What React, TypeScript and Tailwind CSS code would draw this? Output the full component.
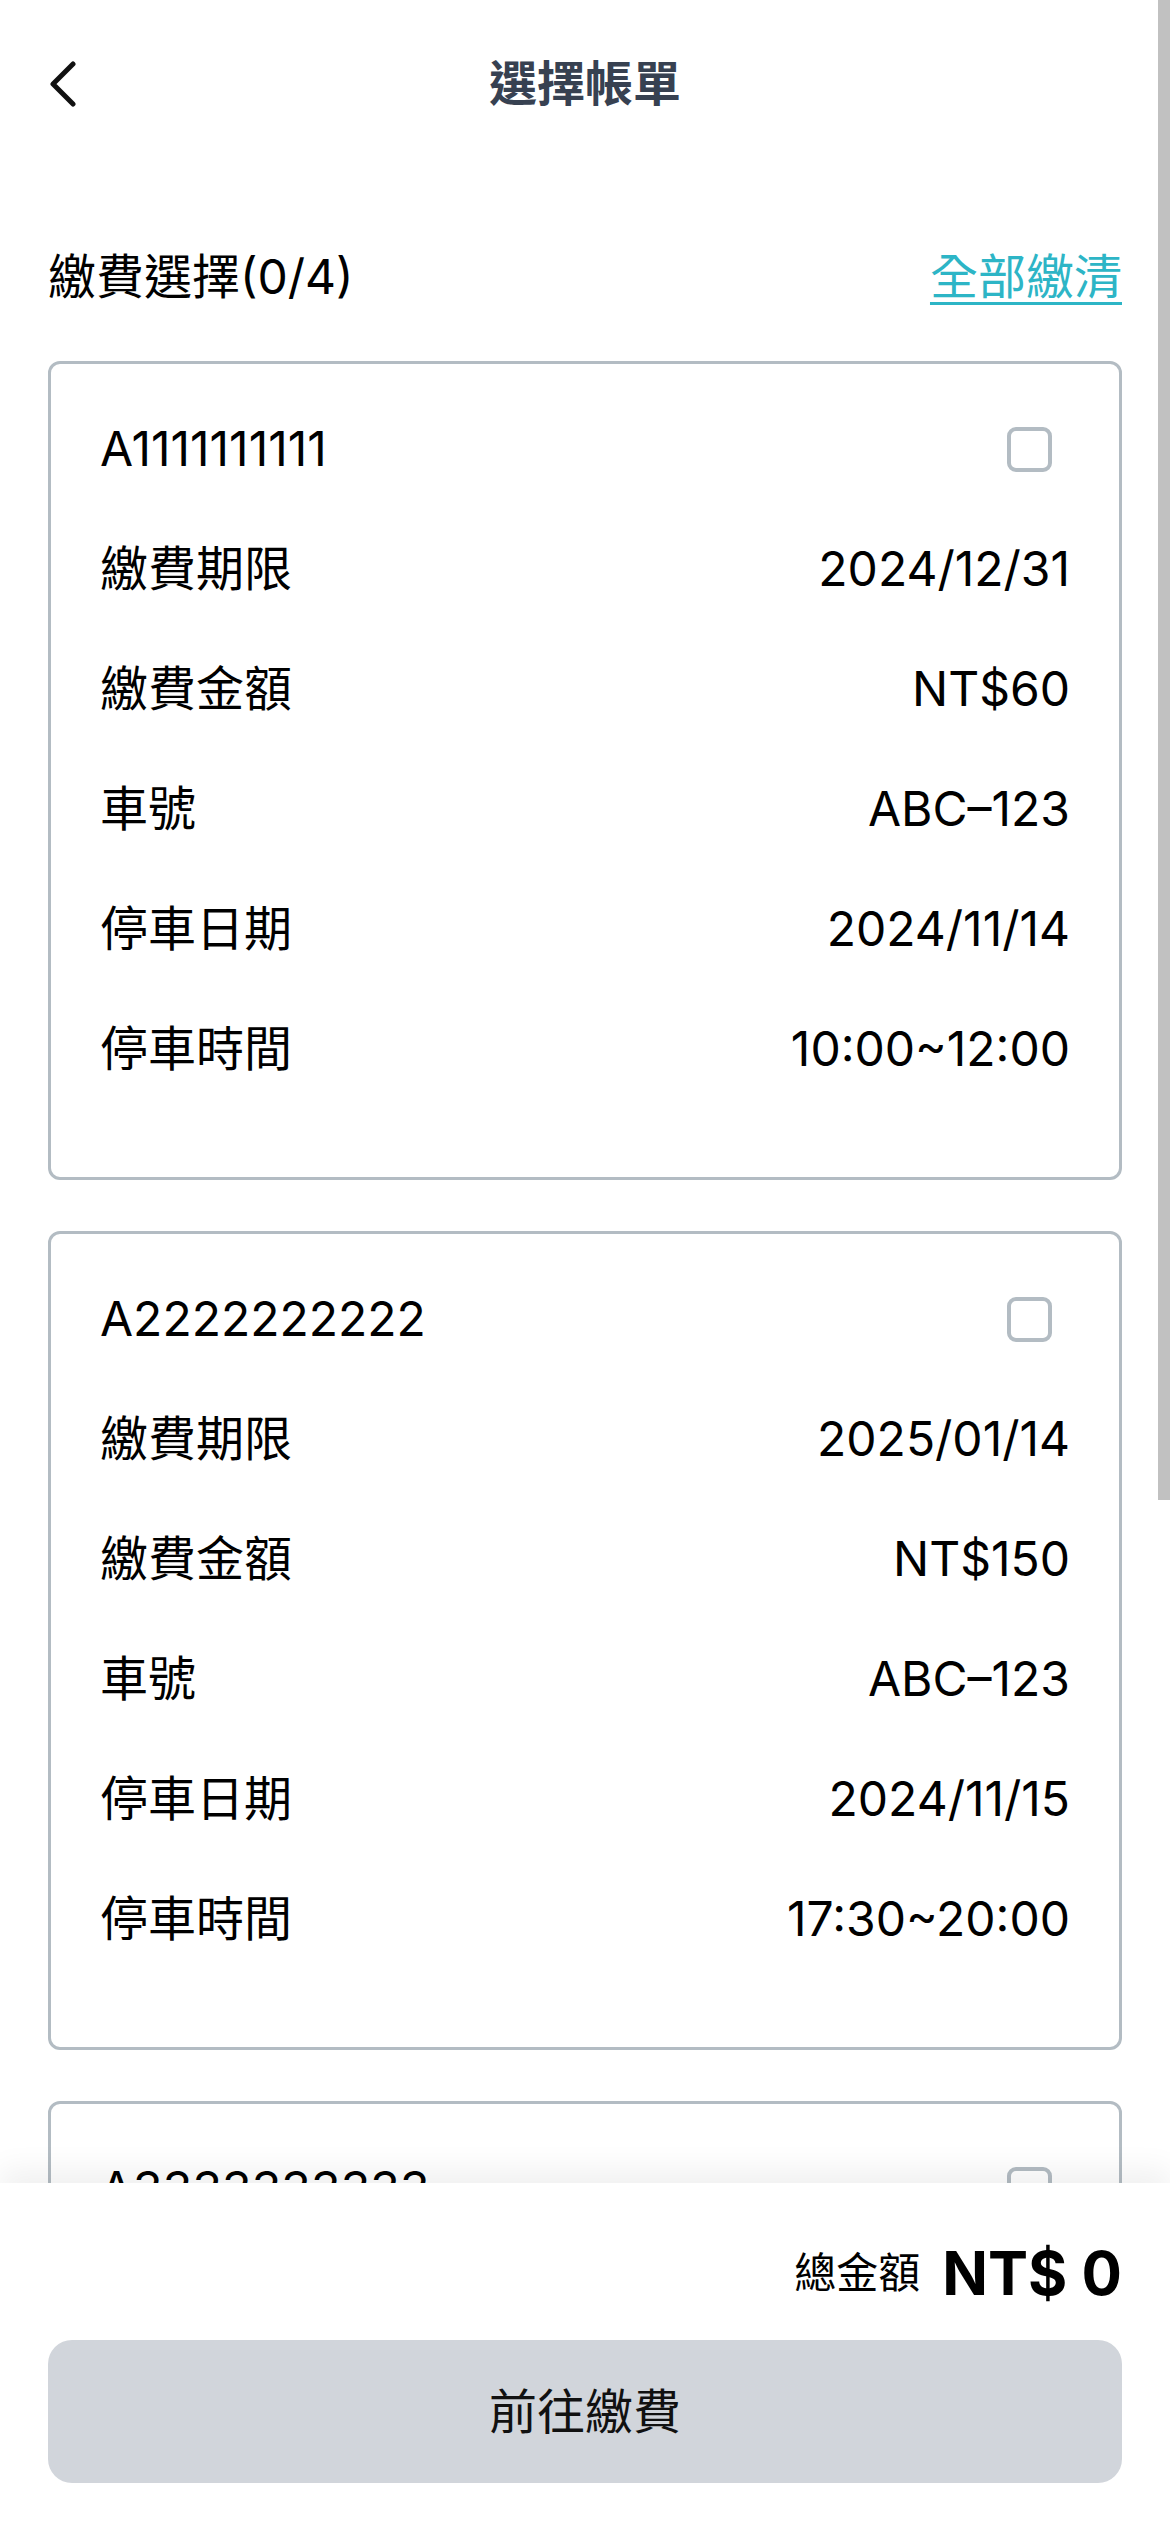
import React from 'react';

type Bill = {
  id: string;
  deadline: string;
  amount: number;
  plate: string;
  date: string;
  time: string;
};

const bills: Bill[] = [
  { id: 'A1111111111', deadline: '2024/12/31', amount: 60, plate: 'ABC-123', date: '2024/11/14', time: '10:00~12:00' },
  { id: 'A2222222222', deadline: '2025/01/14', amount: 150, plate: 'ABC-123', date: '2024/11/15', time: '17:30~20:00' },
  { id: 'A3333333333', deadline: '2025/01/20', amount: 90, plate: 'ABC-123', date: '2024/11/20', time: '09:00~10:30' },
  { id: 'A4444444444', deadline: '2025/02/01', amount: 120, plate: 'ABC-123', date: '2024/11/28', time: '13:00~15:00' },
];

const Row = ({ label, value }: { label: string; value: string }) => (
  <div className="flex h-[120px] items-center justify-between">
    <span>{label}</span>
    <span>{value}</span>
  </div>
);

const BillCard = ({ bill }: { bill: Bill }) => (
  <div className="shrink-0 rounded-[12px] border-[3px] border-[#b3bcc3] bg-white px-[49px] pt-[25px] pb-[68px]">
    <div className="flex h-[120px] items-center justify-between">
      <span>{bill.id}</span>
      <span className="mr-[18px] h-[45px] w-[45px] rounded-[9px] border-[4px] border-[#b3bcc3]" />
    </div>
    <Row label="繳費期限" value={bill.deadline} />
    <Row label="繳費金額" value={`NT$${bill.amount}`} />
    <Row label="車號" value={bill.plate.replace('-', '–')} />
    <Row label="停車日期" value={bill.date} />
    <Row label="停車時間" value={bill.time} />
  </div>
);

export default function App() {
  return (
    <div className="relative flex h-[2532px] w-[1170px] flex-col overflow-hidden bg-white font-['Inter','Noto_Sans_CJK_TC',sans-serif] text-[48px] leading-none text-black">
      {/* header */}
      <header className="grid h-[168px] shrink-0 grid-cols-[1fr_auto_1fr] items-center px-[48px]">
        <button type="button" className="flex h-[60px] w-[60px] items-center justify-start">
          <svg width="30" height="46" viewBox="0 0 30 46" fill="none">
            <path d="M25 3 L5 23 L25 43" stroke="#111" strokeWidth="5" strokeLinecap="round" strokeLinejoin="round" />
          </svg>
        </button>
        <h1 className="font-bold text-[#374151]">選擇帳單</h1>
        <div />
      </header>

      <div className="mt-[73px] flex h-[72px] shrink-0 items-center justify-between px-[48px]">
        <span>繳費選擇(0/{bills.length})</span>
        <button type="button" className="text-[#2db5c6] underline decoration-[3px] underline-offset-[8px]">
          全部繳清
        </button>
      </div>

      <div className="mt-[48px] flex min-h-0 flex-1 flex-col gap-[51px] overflow-hidden px-[48px]">
        {bills.map((b) => (
          <BillCard key={b.id} bill={b} />
        ))}
      </div>

      {/* bottom bar */}
      <div className="relative z-10 shrink-0 bg-white px-[48px] pt-[54px] pb-[49px] shadow-[0_-14px_28px_rgba(0,0,0,0.06)]">
        <div className="flex h-[72px] items-center justify-end gap-[22px]">
          <span className="text-[42px]">總金額</span>
          <span className="text-[60px] font-bold">NT$ 0</span>
        </div>
        <button
          type="button"
          disabled
          className="mt-[31px] flex h-[143px] w-full items-center justify-center rounded-[24px] bg-[#d1d5db] text-[48px] text-[#111]"
        >
          前往繳費
        </button>
      </div>

      {/* scrollbar thumb */}
      <div className="absolute top-0 right-0 h-[1500px] w-[12px] bg-[#c1c1c1]" />
    </div>
  );
}
